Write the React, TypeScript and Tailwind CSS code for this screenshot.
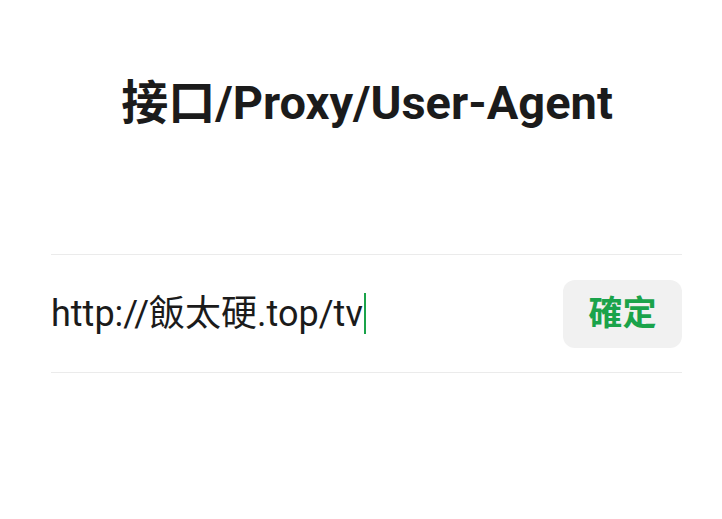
export default function App() {
  return (
    <div
      className="w-[722px] h-[519px] bg-white text-[#1b1b1b]"
      style={{ fontFamily: 'Roboto, "Noto Sans CJK SC", sans-serif' }}
    >
      <h1 className="pt-[73px] pl-[12px] text-center text-[47px] font-bold leading-[60px]">
        接口/Proxy/User-Agent
      </h1>

      <div className="ml-[51px] mr-[40px] mt-[121px] border-t border-b border-[#ebebeb]">
        <div className="flex items-center h-[117px]">
          <div className="flex-1 flex items-center text-[36px]">
            <span>http://飯太硬.top/tv</span>
            <span className="w-[2px] h-[41px] bg-[#1aa34a] ml-[1px]" />
          </div>
          <button className="w-[119px] h-[68px] rounded-[12px] bg-[#f1f1f1] text-[#1aa34a] text-[34px] font-bold">
            確定
          </button>
        </div>
      </div>
    </div>
  );
}
